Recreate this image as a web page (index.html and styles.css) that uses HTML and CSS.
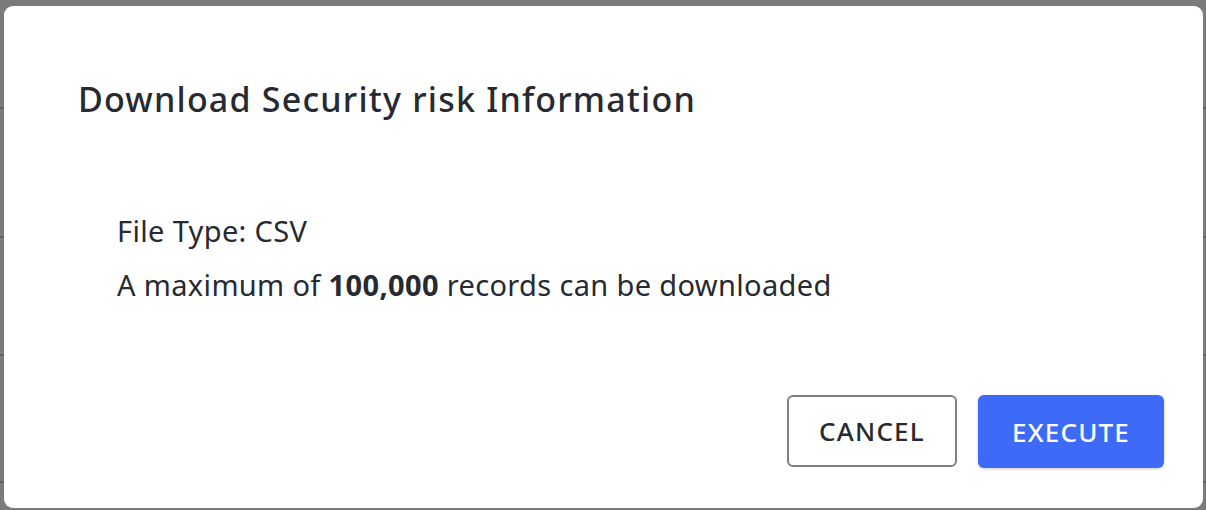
FILE: index.html
```html
<!DOCTYPE html>
<html>
<head>
<meta charset="utf-8">
<link rel="stylesheet" href="styles.css">
</head>
<body>
<div class="page">
  <div class="row row-a"></div>
  <div class="row row-b"></div>
  <div class="row row-c"></div>
  <div class="row row-d"></div>
</div>
<div class="overlay">
  <div class="dialog">
    <h2 class="title">Download Security risk Information</h2>
    <div class="content">
      <p class="line">File Type: CSV</p>
      <p class="line">A maximum of <strong>100,000</strong> records can be downloaded</p>
    </div>
    <div class="actions">
      <button class="btn btn-cancel">CANCEL</button>
      <button class="btn btn-execute">EXECUTE</button>
    </div>
  </div>
</div>
</body>
</html>
```

FILE: styles.css
```css
html, body {
  margin: 0;
  padding: 0;
}
body {
  width: 1206px;
  height: 510px;
  overflow: hidden;
  background: #7b7b7b;
  font-family: "Noto Sans", "Open Sans", sans-serif;
}
.page {
  display: flex;
  flex-direction: column;
}
.row {
  border-bottom: 2px solid #5f6166;
}
.row-a { height: 107px; }
.row-b { height: 127px; }
.row-c { height: 116px; }
.row-d { height: 125px; }
.overlay {
  position: fixed;
  inset: 0;
  padding: 6px 3px 2px 4px;
  display: flex;
}
.dialog {
  flex: 1;
  background: #ffffff;
  border-radius: 9px;
  padding: 71px 39px 40px 74px;
  display: flex;
  flex-direction: column;
  color: #272a30;
}
.title {
  margin: 0;
  font-size: 34px;
  line-height: 44px;
  font-weight: 500;
  letter-spacing: 1.2px;
}
.content {
  margin-top: 83px;
  padding-left: 39px;
}
.line {
  margin: 0;
  font-size: 29px;
  line-height: 54px;
  letter-spacing: 0.35px;
}
.line strong {
  font-weight: 700;
}
.actions {
  margin-top: auto;
  display: flex;
  justify-content: flex-end;
  gap: 21px;
}
.btn {
  font-family: inherit;
  font-size: 26px;
  font-weight: 500;
  letter-spacing: 1.2px;
  height: 73px;
  border-radius: 6px;
  padding: 0;
  cursor: pointer;
}
.btn-cancel {
  width: 170px;
  height: 72px;
  background: #ffffff;
  border: 2px solid #7d8088;
  color: #272a30;
}
.btn-execute {
  width: 186px;
  background: #3d6bf7;
  border: none;
  color: #ffffff;
  box-shadow: 0 1px 3px rgba(0, 0, 0, 0.2);
}
```
